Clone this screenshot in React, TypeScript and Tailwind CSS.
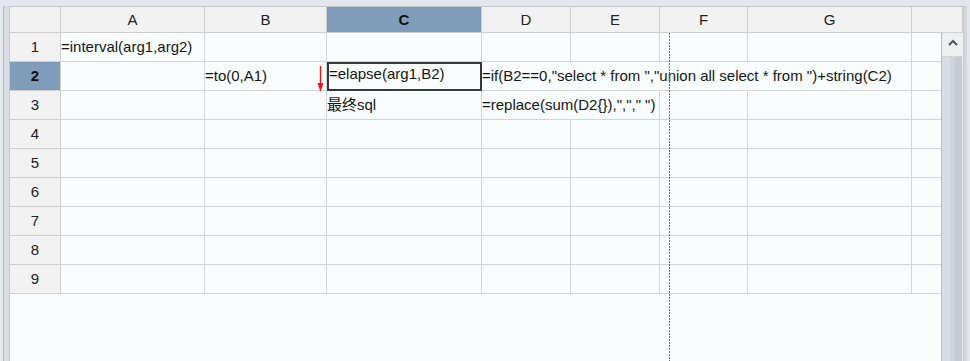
import React from "react";

const widths = [
  "w-[51px]",
  "w-[144px]",
  "w-[122px]",
  "w-[155px]",
  "w-[89px]",
  "w-[89px]",
  "w-[88px]",
  "w-[164px]",
];
const letters = ["", "A", "B", "C", "D", "E", "F", "G"];

type Cell = { text?: string; hideRight?: boolean };

const data: Record<number, Record<number, Cell>> = {
  1: { 1: { text: "=interval(arg1,arg2)" } },
  2: {
    2: { text: "=to(0,A1)" },
    3: { text: "=elapse(arg1,B2)" },
    4: {
      text: '=if(B2==0,"select * from ","union all select * from ")+string(C2)',
      hideRight: true,
    },
    5: { hideRight: true },
    6: { hideRight: true },
  },
  3: {
    3: { text: "最终sql" },
    4: { text: '=replace(sum(D2{}),","," ")', hideRight: true },
  },
};

const font = { fontFamily: '"Liberation Sans", "Noto Sans CJK SC", Arial, sans-serif' };

function HeaderRow() {
  return (
    <div className="flex h-[26px] shrink-0">
      {letters.map((l, i) => (
        <div
          key={i}
          className={`${widths[i]} shrink-0 h-full flex items-center justify-center pt-[2px] border-r border-b border-[#cfcfcf] text-[15px] ${
            i === 3 ? "bg-[#7f9dbb] font-bold text-[#111]" : "bg-[#f2f2f2] text-[#222]"
          }`}
        >
          {l}
        </div>
      ))}
      <div className="w-[51px] shrink-0 h-full border-r border-b border-[#cfcfcf] bg-[#f2f2f2]" />
    </div>
  );
}

function BodyRow({ r }: { r: number }) {
  const row = data[r] || {};
  return (
    <div className="flex h-[29px] shrink-0">
      <div
        className={`${widths[0]} shrink-0 h-full flex items-center justify-center border-r border-b border-[#cfcfcf] text-[15px] ${
          r === 2 ? "bg-[#7f9dbb] font-bold text-[#111]" : "bg-[#f2f2f2] text-[#222]"
        }`}
      >
        {r}
      </div>
      {[1, 2, 3, 4, 5, 6, 7].map((c) => {
        const cell = row[c] || {};
        const selected = r === 2 && c === 3;
        return (
          <div
            key={c}
            className={`${widths[c]} shrink-0 h-full relative flex items-center border-b border-[#d4d4d4] border-r ${
              cell.hideRight ? "border-r-transparent" : ""
            } text-[15px] text-[#151515] whitespace-nowrap`}
          >
            {cell.text && (
              <span className={selected ? "-mt-[3px] pl-[2px]" : "mt-[1px]"}>{cell.text}</span>
            )}
            {selected && (
              <div className="absolute left-0 top-0 -right-px -bottom-px border-2 border-[#383838]" />
            )}
            {r === 2 && c === 2 && (
              <svg
                className="absolute left-[112px] top-[4px]"
                width="7"
                height="26"
                viewBox="0 0 7 26"
              >
                <line x1="3.5" y1="0" x2="3.5" y2="19" stroke="#e8141e" strokeWidth="1.4" />
                <polygon points="0.5,17 6.5,17 3.5,26" fill="#e8141e" />
              </svg>
            )}
          </div>
        );
      })}
      <div className="w-[29px] shrink-0 h-full border-b border-[#d4d4d4]" />
    </div>
  );
}

export default function App() {
  return (
    <div
      className="w-[970px] h-[361px] overflow-hidden flex bg-[#e3e6ea]"
      style={font}
    >
      {/* left frame */}
      <div className="flex shrink-0 h-full pt-[6px]">
        <div className="w-[3px] bg-[#e4e7eb]" />
        <div className="w-px bg-[#b6bbc3]" />
        <div className="w-[5px] bg-[#d9dde3]" />
        <div className="w-px bg-[#c4c8ce]" />
      </div>
      {/* main */}
      <div className="flex flex-col w-[953px] shrink-0 h-full">
        <div className="h-[6px] shrink-0 bg-[#e3e6ea]" />
        <div className="h-px shrink-0 bg-[#c2c6cd]" />
        <HeaderRow />
        <div className="flex flex-1 min-h-0">
          <div className="relative w-[931px] shrink-0 h-full bg-[#f9fdfd] flex flex-col">
            {[1, 2, 3, 4, 5, 6, 7, 8, 9].map((r) => (
              <BodyRow key={r} r={r} />
            ))}
            <div className="absolute left-[659px] top-0 bottom-0 w-px bg-[linear-gradient(to_bottom,#6f6f6f_66%,transparent_66%)] bg-[length:1px_3px]" />
          </div>
          {/* scrollbar */}
          <div className="w-[22px] shrink-0 h-full flex flex-col border-l border-[#b7bcc4]">
            <div className="h-[24px] shrink-0 bg-[#eeeff1] flex items-center justify-center border-b border-[#d0d3d8]">
              <svg width="10" height="7" viewBox="0 0 10 7" className="-mt-[4px]">
                <polyline points="1,6 5,2 9,6" fill="none" stroke="#555" strokeWidth="2" />
              </svg>
            </div>
            <div className="flex-1 flex">
              <div className="w-[8px] bg-[#d8dce5]" />
              <div className="w-[5px] bg-[#cfd3dc]" />
              <div className="w-[7px] bg-[#c6cbd3]" />
              <div className="w-px bg-[#e9ecf0]" />
            </div>
          </div>
        </div>
      </div>
      {/* right frame */}
      <div className="flex shrink-0 h-full pt-[6px]">
        <div className="w-px bg-[#c8ccd3]" />
        <div className="w-[3px] bg-[#d3d7dd]" />
        <div className="w-[3px] bg-[#e4e7eb]" />
      </div>
    </div>
  );
}
